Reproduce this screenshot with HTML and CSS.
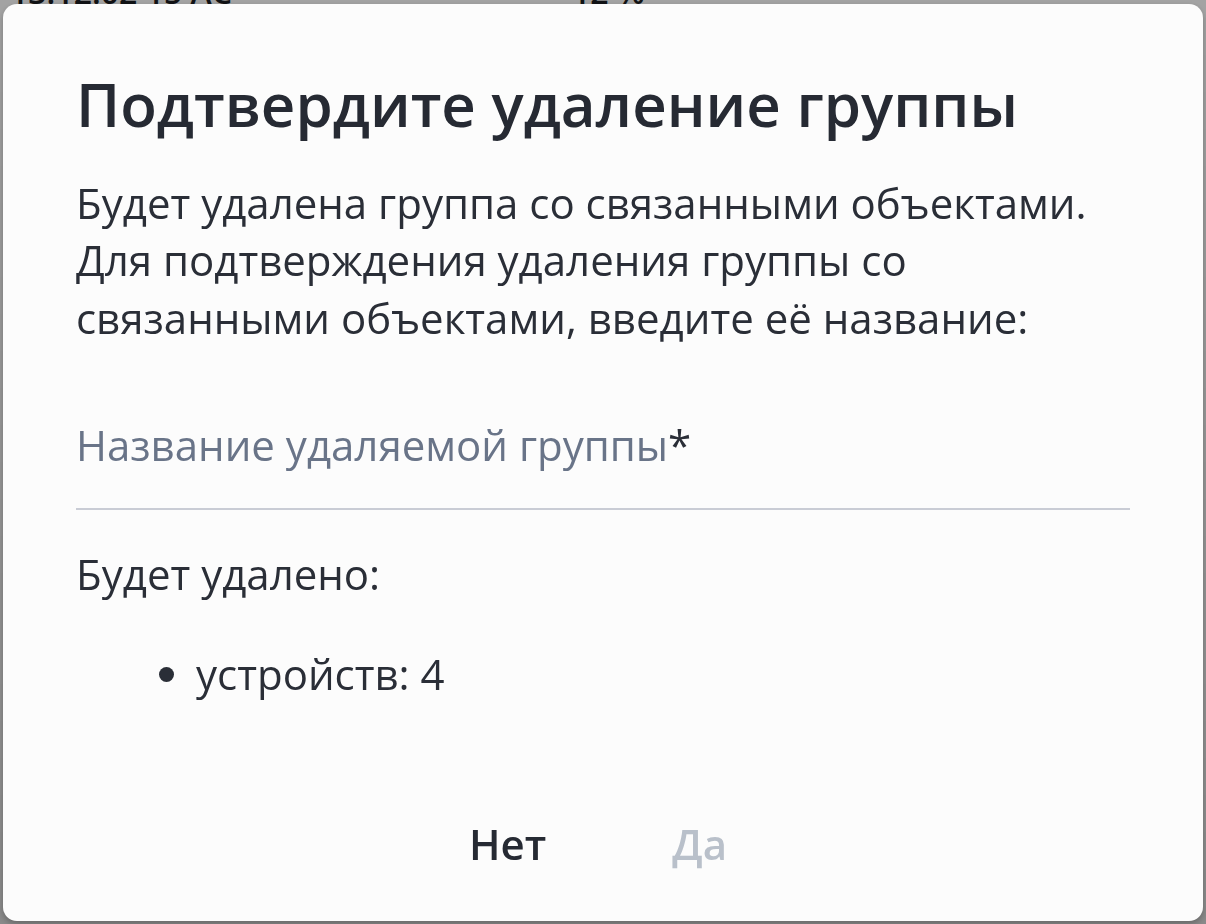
FILE: index.html
```html
<!DOCTYPE html>
<html lang="ru">
<head>
  <meta charset="UTF-8">
  <meta name="viewport" content="width=device-width, initial-scale=1.0">
  <title>Удаление группы</title>
  <link rel="stylesheet" href="styles.css">
</head>
<body>
  <div class="page">
    <div class="page-row">
      <span class="cell-time">13:12:02 15 AC</span>
      <span class="cell-value">12 %</span>
    </div>
  </div>

  <div class="overlay">
    <div class="dialog">
      <h1 class="dialog-title">Подтвердите удаление группы</h1>
      <p class="dialog-text">Будет удалена группа со связанными объектами. Для подтверждения удаления группы со связанными объектами, введите её название:</p>

      <label class="field">
        <span class="field-label">Название удаляемой группы<span class="req">*</span></span>
        <input class="field-input" type="text" name="groupName">
      </label>

      <p class="dialog-text summary">Будет удалено:</p>
      <ul class="summary-list">
        <li>устройств: 4</li>
      </ul>

      <div class="dialog-actions">
        <button class="btn btn-no" type="button">Нет</button>
        <button class="btn btn-yes" type="button" disabled>Да</button>
      </div>
    </div>
  </div>
</body>
</html>
```

FILE: styles.css
```css
body {
  margin: 0;
  font-family: "Open Sans", "Noto Sans", sans-serif;
  background: #fff;
  height: 924px;
  overflow: hidden;
}

.page {
  height: 100%;
}
.page-row {
  display: flex;
  gap: 340px;
  padding-left: 10px;
  margin-top: -30px;
  font-size: 32px;
  font-weight: 600;
  color: #1b1d22;
}

.overlay {
  position: fixed;
  inset: 0;
  display: flex;
  align-items: center;
  justify-content: center;
  background: linear-gradient(rgba(0, 0, 0, 0.36), rgba(0, 0, 0, 0.46));
}

.dialog {
  width: 1200px;
  height: 917px;
  box-sizing: border-box;
  padding: 61px 73px 0;
  background: #fcfcfc;
  border-radius: 14px;
  box-shadow: 0 3px 6px rgba(0, 0, 0, 0.25);
  display: flex;
  flex-direction: column;
  color: #2a2e37;
}

.dialog-title {
  margin: 0;
  font-size: 60px;
  font-weight: 600;
  line-height: 78px;
  color: #262a33;
}

.dialog-text {
  margin: 31px 0 0;
  font-size: 42px;
  line-height: 57.5px;
}

.field {
  display: block;
  position: relative;
  margin-top: 72px;
  border-bottom: 2px solid #c9ccd5;
  height: 90px;
}
.field-label {
  position: absolute;
  left: 0;
  top: 0;
  font-size: 42px;
  line-height: 54px;
  color: #697488;
}
.req {
  color: #2a2e37;
}
.field-input {
  width: 100%;
  height: 100%;
  border: none;
  background: transparent;
  outline: none;
  font: inherit;
  font-size: 42px;
}

.dialog-text.summary {
  margin-top: 35px;
}

.summary-list {
  margin: 42px 0 0;
  padding-left: 120px;
  font-size: 42px;
  line-height: 57.5px;
}

.dialog-actions {
  display: flex;
  justify-content: center;
  gap: 96px;
  margin-top: 113px;
  padding-right: 10px;
}
.btn {
  background: none;
  border: none;
  padding: 0 15px;
  font-family: inherit;
  font-size: 42px;
  font-weight: 600;
  color: #262a33;
  cursor: pointer;
}
.btn-yes:disabled {
  color: #b9c0ca;
  cursor: default;
}
```
